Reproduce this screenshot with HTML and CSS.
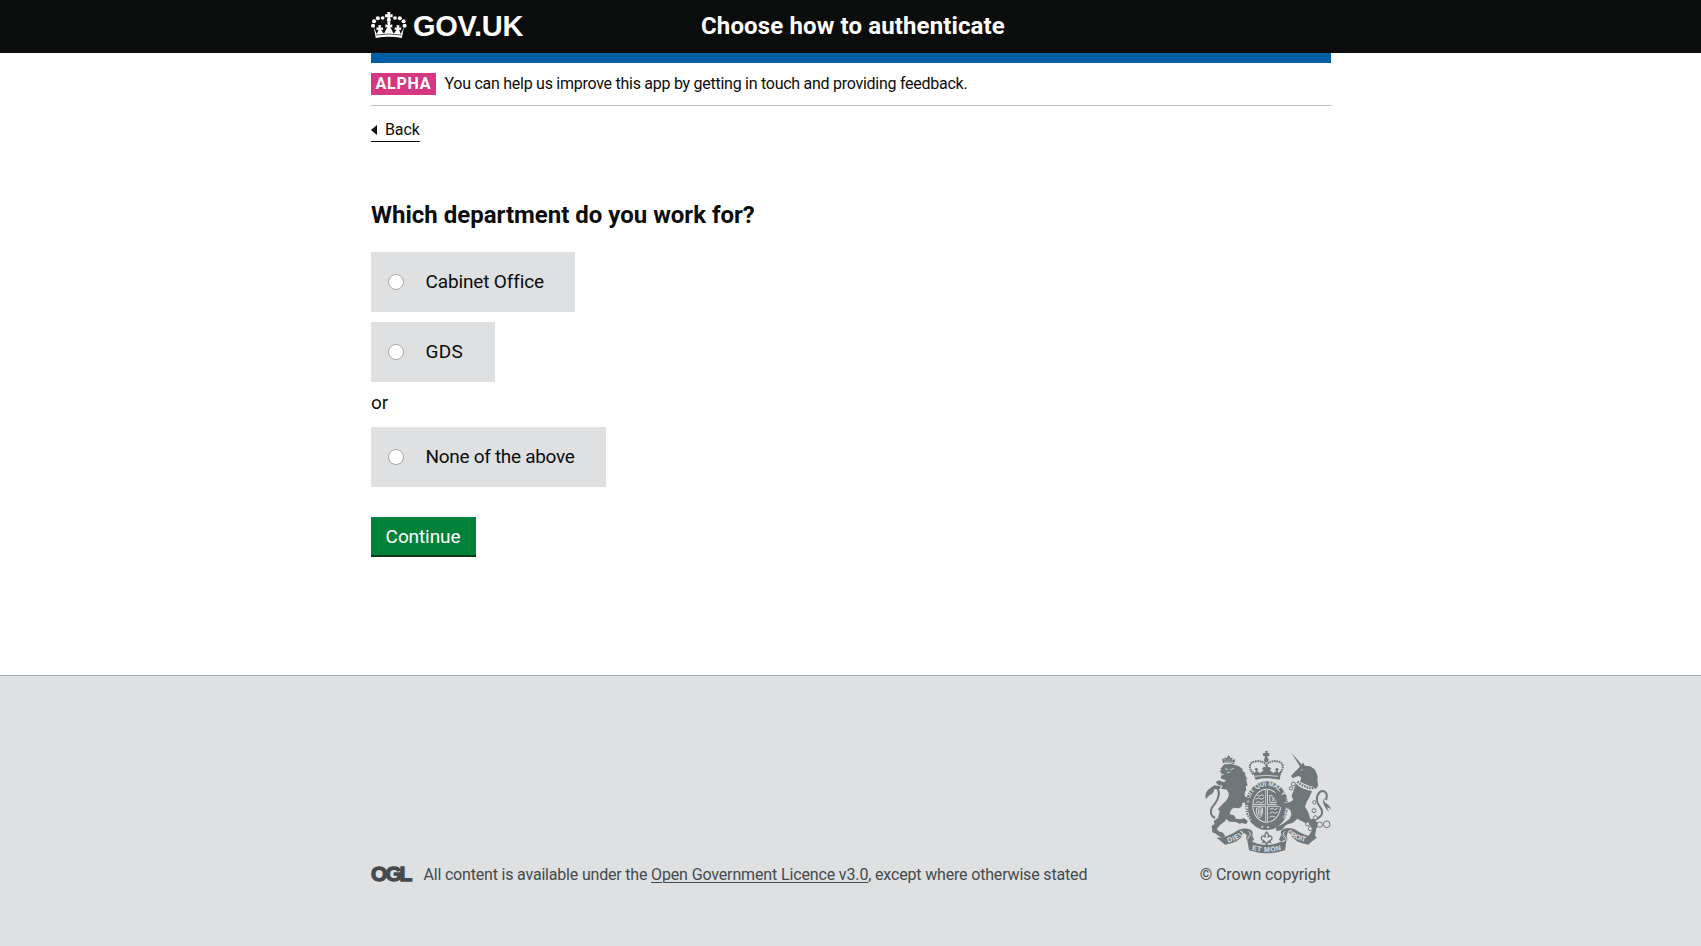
FILE: index.html
```html
<!DOCTYPE html>
<html lang="en">
<head>
<meta charset="utf-8">
<title>Choose how to authenticate</title>
<link rel="stylesheet" href="styles.css">
</head>
<body>
<header class="site-header">
  <div class="container header-inner">
    <a class="brand" href="#">
      <svg class="crown" width="36" height="27" viewBox="0 0 105 81" preserveAspectRatio="none" fill="#fff">
        <path d="M47 0h10l-2 7h8v9h-8l2 6H47l2-6h-8V7h8z"/>
        <circle cx="52" cy="24" r="6"/>
        <circle cx="34" cy="18" r="5.5"/><circle cx="20" cy="19" r="6"/><circle cx="9" cy="28" r="6"/><circle cx="6" cy="41" r="6"/>
        <circle cx="70" cy="18" r="5.5"/><circle cx="84" cy="19" r="6"/><circle cx="95" cy="28" r="6"/><circle cx="98" cy="41" r="6"/>
        <path d="M8 46l9 20 5-13-6 1v-8l6 1-1-7h9l-2 7 7-1v8l-6-1 9 12 10-21-6 3v-10l7 2-2-9h10l-2 9 7-2v10l-6-3 10 21 9-12-6 1v-8l7 1-2-7h9l-1 7 6-1v8l-6-1 5 13 9-20-6 32q-38-8-76 0z"/>
        <path d="M15 69q37-6 74 0" fill="none" stroke="#0b0c0c" stroke-width="2"/>
      </svg>
      <span class="brand-name">GOV.UK</span>
    </a>
    <span class="service-name">Choose how to authenticate</span>
  </div>
</header>
<main class="container">
  <div class="phase-banner">
    <strong class="phase-tag">ALPHA</strong>
    <span class="phase-text">You can help us improve this app by getting in touch and providing feedback.</span>
  </div>
  <a class="back-link" href="#">Back</a>
  <form class="question">
    <h1 class="question-title">Which department do you work for?</h1>
    <label class="choice choice-cabinet"><input type="radio" name="department" class="choice-radio"><span class="choice-label">Cabinet Office</span></label>
    <label class="choice choice-gds"><input type="radio" name="department" class="choice-radio"><span class="choice-label">GDS</span></label>
    <p class="choice-or">or</p>
    <label class="choice choice-none"><input type="radio" name="department" class="choice-radio"><span class="choice-label">None of the above</span></label>
    <button class="button" type="button">Continue</button>
  </form>
</main>
<footer class="site-footer">
  <div class="container footer-inner">
    <div class="licence">
      <svg class="ogl" width="42" height="23" viewBox="0 0 42 23"><text class="ogl-text" y="17.6" x="0.1 14.6 28.6">OGL</text></svg>
      <p class="licence-text"><span class="licence-a">All content is available under the </span><a class="licence-link" href="#">Open Government Licence v3.0</a><span class="licence-b">, except where otherwise stated</span></p>
    </div>
    <div class="copyright">
      <svg class="crest" width="126" height="104" viewBox="77 30 378 312" fill="#6f777b">
        <!-- royal crown -->
        <path d="M257 33h9l-2 6h6v9h-6l1 6h-9l1-6h-6v-9h8z"/>
        <circle cx="261" cy="60" r="7"/>
        <path d="M222 103q-22-30 2-38 22-6 37 9 15-15 37-9 24 8 2 38M261 74v28" fill="none" stroke="#6f777b" stroke-width="6" stroke-dasharray="5 2"/>
        <path d="M218 91l8 8 4-7-5-4 6-5 6 5-4 5 9 6 11-8-5-5 5-5h6v-6h6v6h6l5 5-5 5 11 8 9-6-4-5 6-5 6 5-5 4 4 7 8-8-5 28q-36-8-72 0z"/>
        <path d="M226 109q35-6 70 0" fill="none" stroke="#dee0e2" stroke-width="2.5"/>
        <!-- garter and shield -->
        <ellipse cx="262" cy="197" rx="65" ry="73"/>
        <ellipse cx="262" cy="197" rx="43" ry="51" fill="#dee0e2"/>
        <ellipse cx="262" cy="197" rx="40" ry="48"/>
        <path d="M262 148v98M221 196h82" stroke="#dee0e2" stroke-width="8"/>
        <path d="M262 148v98M221 196h82" stroke="#6f777b" stroke-width="3"/>
        <g fill="none" stroke="#dee0e2" stroke-width="2.8">
          <path d="M233 165l7 4 8-5 6 4M229 177l9-3 8 4 9-5M229 189l7-4 9 4 9-5M271 166l20 4v18h-19zM278 171l8 12M278 184l9-13M232 204l17 0q3 20-8 30-14-11-9-30M237 208v16M242 208v20M247 208v14M271 208l8-3 7 4 9-4M270 220l9-4 8 4 8-4M270 232l8-4 9 3"/>
        </g>
        <path id="garter" d="M224 249a56 64 0 1 1 76 0" fill="none"/>
        <text class="garter-text"><textPath href="#garter" startOffset="12" textLength="262">HONI SOIT QUI MAL Y PENSE</textPath></text>
        <circle cx="249" cy="260" r="3" fill="#dee0e2"/><circle cx="266" cy="262" r="3" fill="#dee0e2"/>
        <!-- lion -->
        <path d="M131 70l-3-16 7 5 1-7 6 3 4-8h5l2 8 6-3 1 8 8-3-4 16q-16-7-33-3z"/>
        <path d="M134 67q14-4 29 1M139 58l1 5M149 56v6M159 58l-1 5" fill="none" stroke="#dee0e2" stroke-width="2"/>
        <path d="M135 73l20-1 23 6 13 10-3 2 12 12-4 1 9 16-5-1 5 19-6 1 2 12q-7 7-4 20l14 4 3 9-11-2-3 9-9-3-5 14-9 4-15-2q-9 6-11 20l13 3 6 10 14 2 10-4 12 10-6 8-13-3-6 2-12-5-18-1-11-8-3 7-14 10-11 13 8 8 9 2 8 9-5 8-13-5-12-9-8-3-2-19 9-6-3-9 13-9 5-20-5-7 17-18q17-14 15-30l-5-8 2-8-7-3 3-9-7-4 6-6-14-5-2-9 8-2 1-4-8 3 2-6-6-2 6-9-5 1z"/>
        <path d="M137 86l9 3M153 89l11-4M143 98l10-2" fill="none" stroke="#dee0e2" stroke-width="2.5"/>
        <path d="M149 150l-24-4 5-9-13-2-8-8 9-6 13 4 16 6 18-5z"/>
        <path d="M107 234q-18-9-10-30l11-15q17-25 7-43-6-8-13-2" fill="none" stroke="#6f777b" stroke-width="6"/>
        <path d="M79 178q-3-19 9-30l17-12 20 3-4 8-16 1q-3 15-15 18z"/>
        <!-- unicorn -->
        <path d="M336 38l34 39-7 4z"/>
        <path d="M346 96l12-12 8-9 6-7 4 9 17 2 14 10 8 20-1 13 3 14-7 11-48-22 4-11-7-6-10 2-8 5-6-7z"/>
        <circle cx="368" cy="90" r="2" fill="#dee0e2"/>
        <path d="M350 130l48 24-9 20-7 12-5 14 10 17 6 20 15 4 10 12-7 13-4 20 4 8-11 8-18-5 15-24-5-19-19-7-19-11-13 12-20 6-14 16-16 4-1-12 20-10 20-15 6-12-3-15-15-10-12 3-13-8-3-18-11-11 5-8 11 2 7 9 11-5 10 12-8 6-10-3 8 11 19-4 10-6-5-12z"/>
        <path d="M353 126q20 19 49 20" fill="none" stroke="#dee0e2" stroke-width="12"/>
        <path d="M354 125q21 19 49 20" fill="none" stroke="#6f777b" stroke-width="7" stroke-dasharray="5 3"/>
        <path d="M396 241q18-2 28-13 10-12-3-29-13-17-6-34 8-15 20-11 12 7 5 26" fill="none" stroke="#6f777b" stroke-width="6"/>
        <path d="M438 172q-9 13 4 19 10 5 13 19-5-7-12-8l6 14q-10-10-14-19-9-16 3-25z"/>
        <g stroke="#6f777b" stroke-width="3" fill="#dee0e2">
          <circle cx="342" cy="132" r="6"/><circle cx="335" cy="145" r="5"/><circle cx="405" cy="187" r="5"/><circle cx="404" cy="212" r="6"/><circle cx="408" cy="233" r="6"/><circle cx="385" cy="252" r="6"/><circle cx="393" cy="266" r="6"/><circle cx="421" cy="254" r="8"/><circle cx="442" cy="253" r="10"/>
        </g>
        <!-- motto scroll -->
        <path d="M111 293q36-1 67-24 24-8 37 1 11 8-1 21l-14 8 2-14-8-6q-15 31-57 35-14-13-26-21z"/>
        <path d="M413 291q-37-1-67-23-24-8-37 1-10 8 1 21l14 9-2-15 8-6q15 31 57 36 14-13 26-23z"/>
        <path d="M203 296q58 37 119 0l-5 35q-55 18-108 0zM203 299l16-13 5 14-11 7zM321 299l-17-13-5 14 12 7z"/>
        <path d="M208 274q12 8-4 21M317 274q-12 8 4 21" fill="none" stroke="#dee0e2" stroke-width="3"/>
        <path d="M228 274h68l-4 31q-30 9-60 0z" fill="#dee0e2"/>
        <path d="M262 276q9 9 3 17 4-8 11-4 6 9-6 14l3 4-7-1-4 8-4-8-7 1 3-4q-12-5-6-14 7-4 11 4-6-8 3-17z" fill="none" stroke="#6f777b" stroke-width="4"/>
        <path id="motto-left" d="M146 308q31-7 52-29" fill="none"/>
        <path id="motto-mid" d="M217 329q45 13 93 0" fill="none"/>
        <path id="motto-right" d="M322 279q27 22 59 27" fill="none"/>
        <g class="motto-text">
          <text><textPath href="#motto-left" textLength="56">DIEU</textPath></text>
          <text><textPath href="#motto-mid" textLength="90">ET MON</textPath></text>
          <text><textPath href="#motto-right" textLength="62">DROIT</textPath></text>
        </g>
      </svg>
      <span class="copyright-text">© Crown copyright</span>
    </div>
  </div>
</footer>
</body>
</html>
```
FILE: styles.css
```css
* { box-sizing: border-box; }
body { margin: 0; min-height: 946px; display: flex; flex-direction: column; background: #fff; color: #0b0c0c; font: 19px/25px Roboto, "Liberation Sans", sans-serif; }
a { color: inherit; text-decoration: none; }
.container { width: 960px; margin-left: 371px; }
.site-header { height: 53px; background: #0b0c0c; color: #fff; }
.header-inner { display: flex; height: 53px; }
.brand { display: flex; width: 330px; padding-top: 12px; gap: 6px; }
.crown { display: block; }
.brand-name { font: bold 29px/29px "Liberation Sans", Arial, sans-serif; letter-spacing: -.25px; }
.service-name { padding-top: 11px; font-size: 24px; line-height: 30px; font-weight: 700; letter-spacing: .13px; }
.phase-banner { display: flex; height: 53px; padding-top: 10px; gap: 8.5px; border-top: 10px solid #005ea5; border-bottom: 1px solid #bfc1c3; font-size: 16px; line-height: 22px; }
.phase-tag { width: 65px; height: 22px; padding-left: 4.5px; background: #d53880; color: #fff; letter-spacing: .8px; line-height: 21px; }
.phase-text { letter-spacing: -.265px; }
.back-link { display: flex; align-items: center; gap: 8px; width: 49px; height: 23px; margin-top: 13px; border-bottom: 1px solid #0b0c0c; font-size: 16px; line-height: 22px; letter-spacing: -.1px; }
.back-link::before { content: ""; border: 5px solid transparent; border-left: 0; border-right: 6px solid #0b0c0c; }
.question { display: flex; flex-direction: column; align-items: flex-start; }
.question-title { margin: 58px 0 22px; font-size: 24px; line-height: 30px; font-weight: 700; }
.choice { display: flex; align-items: center; gap: 21.5px; height: 60px; padding-left: 17px; margin-bottom: 10px; background: #dee0e2; white-space: nowrap; }
.choice-label { padding-bottom: 2px; }
.choice-cabinet { width: 204px; letter-spacing: -.14px; }
.choice-gds { width: 124px; letter-spacing: .3px; }
.choice-none { width: 235px; margin-bottom: 30px; letter-spacing: -.3px; }
.choice-radio { appearance: none; width: 16px; height: 16px; margin: 0; border: 1px solid #a9a9a9; border-radius: 50%; background: #fff; }
.choice-or { margin: -2px 0 12px; }
.button { width: 105px; height: 40px; padding: 0 1px 0 0; border: 0; border-bottom: 2px solid #003618; background: #00823b; color: #fff; font: inherit; letter-spacing: -.1px; }
.site-footer { flex: 1; margin-top: 118px; border-top: 1px solid #a1acb2; background: #dee0e2; color: #454a4c; font-size: 16px; line-height: 22px; }
.footer-inner { display: flex; justify-content: space-between; align-items: flex-end; padding-top: 74px; }
.licence { display: flex; gap: 10.5px; }
.ogl { display: block; margin-top: -1px; }
.ogl-text { font: bold 21px/23px "Liberation Sans", Arial, sans-serif; fill: #454a4c; stroke: #454a4c; stroke-width: 1.3px; }
.licence-text { margin: 0; white-space: pre; }
.licence-a { letter-spacing: -.19px; }
.licence-link { letter-spacing: -.14px; text-decoration: underline; text-decoration-thickness: 1px; text-underline-offset: 2px; }
.licence-b { letter-spacing: -.17px; }
.copyright { display: flex; flex-direction: column; align-items: flex-end; gap: 10px; }
.crest { display: block; }
.copyright-text { letter-spacing: -.1px; margin-right: .5px; }
.garter-text { font: bold 19px "Liberation Sans", Arial, sans-serif; fill: #dee0e2; }
.motto-text { font: bold 21px "Liberation Sans", Arial, sans-serif; fill: #dee0e2; }
```
